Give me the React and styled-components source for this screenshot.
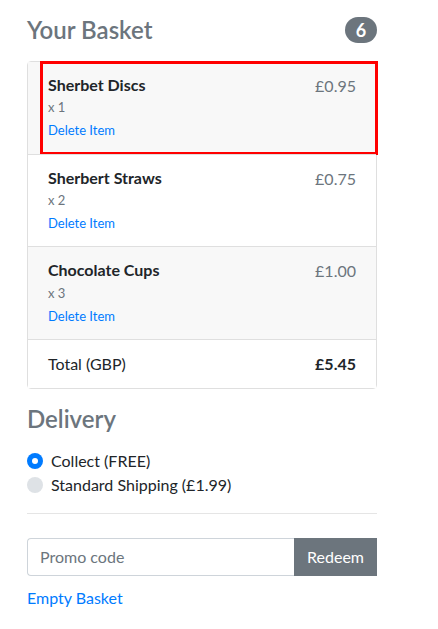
import React from 'react'
import styled, { createGlobalStyle, css } from 'styled-components'

const GlobalStyle = createGlobalStyle`
  * { box-sizing: border-box; }
  body {
    margin: 0;
    background: #fff;
    color: #212529;
    font-family: Lato, "Liberation Sans", sans-serif;
    font-size: 16px;
    line-height: 1.5;
  }
`

const Page = styled.div`
  width: 350px;
  margin-left: 27px;
  padding-top: 16px;
`
const Heading = styled.h4`
  display: flex;
  justify-content: space-between;
  align-items: center;
  margin: 0 0 ${p => p.$gap || 16}px;
  font-size: 24px;
  font-weight: 600;
  line-height: 28.8px;
  color: #6c757d;
`
const Badge = styled.span`
  display: inline-block;
  min-width: 32px;
  padding: 4px 10px;
  border-radius: 13px;
  background: #6c757d;
  color: #fff;
  font-size: 18px;
  font-weight: 700;
  line-height: 18px;
  text-align: center;
`
const List = styled.ul`
  list-style: none;
  margin: 0 0 16px;
  padding: 0;
  border: 1px solid #dfdfdf;
  border-radius: 4px;
`
const Item = styled.li`
  position: relative;
  display: flex;
  justify-content: space-between;
  padding: 12px 20px;
  line-height: 22.6px;
  background: ${p => (p.$shaded ? '#f8f8f8' : '#fff')};
  & + & { border-top: 1px solid #dfdfdf; }
  ${p => p.$total && css`
    line-height: 24px;
  `}
`
const Highlight = styled.div`
  position: absolute;
  left: 12px;
  top: -1px;
  right: -2px;
  bottom: -1px;
  border: 3px solid #ff0000;
  pointer-events: none;
`
const Name = styled.h6`
  margin: 0;
  font-size: 16px;
  font-weight: 700;
  line-height: 22.6px;
  color: #212529;
`
const Qty = styled.small`
  display: block;
  font-size: 13px;
  color: #6c757d;
`
const Delete = styled.a`
  display: block;
  font-size: 13px;
  color: #007bff;
  text-decoration: none;
`
const Price = styled.span`
  color: #6c757d;
  line-height: 24px;
`
const Strong = styled.strong`
  font-weight: 700;
`
const Options = styled.div`
  display: flex;
  flex-direction: column;
`
const Option = styled.label`
  display: flex;
  align-items: center;
  gap: 8px;
  height: 24px;
  line-height: 24px;
`
const Radio = styled.span`
  width: 16px;
  height: 16px;
  border-radius: 50%;
  background: ${p => (p.$checked ? '#007bff' : '#dee2e6')};
  display: flex;
  align-items: center;
  justify-content: center;
  &::after {
    content: '';
    width: 6px;
    height: 6px;
    border-radius: 50%;
    background: ${p => (p.$checked ? '#fff' : 'transparent')};
  }
`
const Rule = styled.hr`
  margin: 16px 0 24px;
  border: 0;
  border-top: 1px solid #e5e5e5;
`
const InputGroup = styled.div`
  display: flex;
  height: 38px;
`
const Input = styled.input`
  flex: 1;
  min-width: 0;
  padding: 6px 12px;
  border: 1px solid #ced4da;
  border-right: 0;
  border-radius: 4px 0 0 4px;
  font: inherit;
  color: #495057;
  &::placeholder { color: #6c757d; }
`
const Button = styled.button`
  width: 83px;
  border: 0;
  background: #6c757d;
  color: #fff;
  font: inherit;
`
const EmptyLink = styled.a`
  display: block;
  margin-top: 10px;
  color: #007bff;
  text-decoration: none;
`

const items = [
  { name: 'Sherbet Discs', qty: 1, price: '£0.95', shaded: true, highlight: true },
  { name: 'Sherbert Straws', qty: 2, price: '£0.75' },
  { name: 'Chocolate Cups', qty: 3, price: '£1.00', shaded: true },
]

export default function App() {
  return (
    <Page>
      <GlobalStyle />
      <Heading>
        Your Basket
        <Badge>6</Badge>
      </Heading>
      <List>
        {items.map(item => (
          <Item key={item.name} $shaded={item.shaded}>
            <div>
              <Name>{item.name}</Name>
              <Qty>x {item.qty}</Qty>
              <Delete href="#">Delete Item</Delete>
            </div>
            <Price>{item.price}</Price>
            {item.highlight && <Highlight />}
          </Item>
        ))}
        <Item $total>
          <span>Total (GBP)</span>
          <Strong>£5.45</Strong>
        </Item>
      </List>
      <Heading $gap={15}>Delivery</Heading>
      <Options>
        <Option><Radio $checked />Collect (FREE)</Option>
        <Option><Radio />Standard Shipping (£1.99)</Option>
      </Options>
      <Rule />
      <InputGroup>
        <Input placeholder="Promo code" />
        <Button>Redeem</Button>
      </InputGroup>
      <EmptyLink href="#">Empty Basket</EmptyLink>
    </Page>
  )
}
